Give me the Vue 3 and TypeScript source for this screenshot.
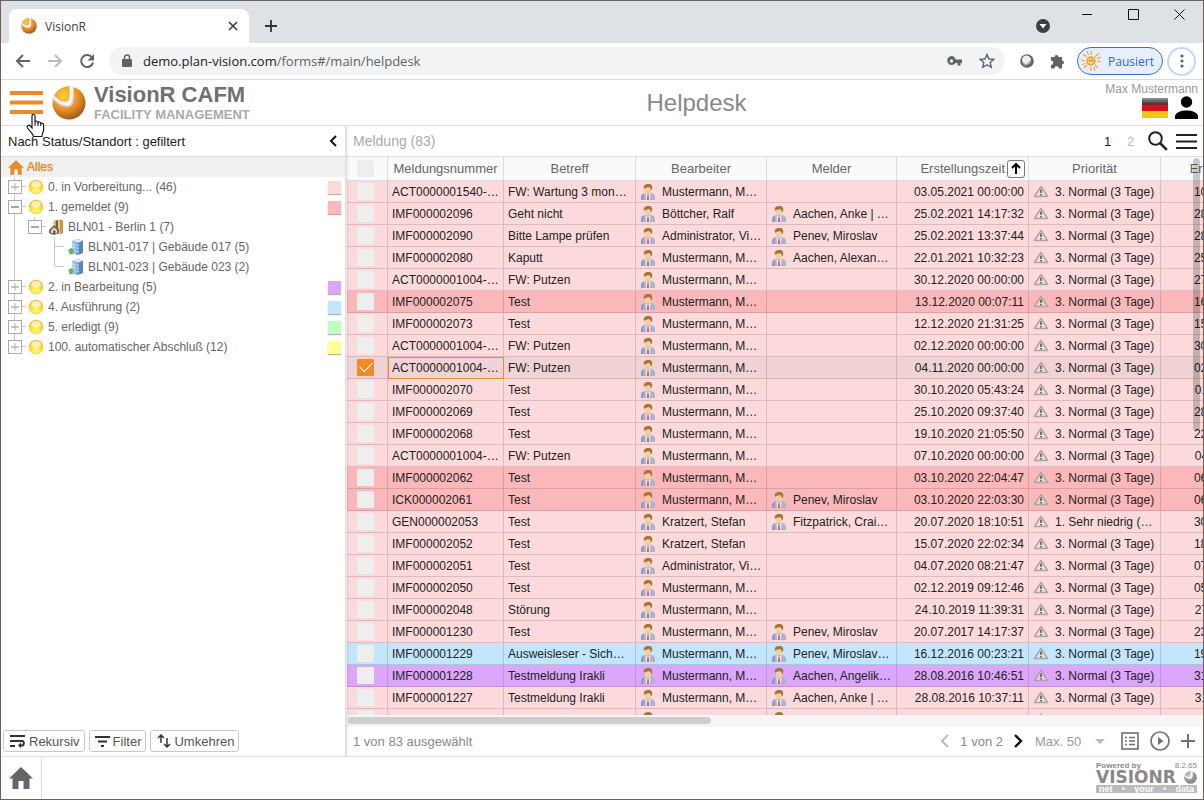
<script setup lang="ts">
import { ref } from 'vue'

type Guide = 'line' | 'blank' | 'first' | 'plus' | 'minus' | 'minusTop' | 'last' | 'tee' | 'end'

interface TreeNode {
  guides: Guide[]
  icon: string
  label: string
  swatch?: string
}

interface Ticket {
  id: string
  subject: string
  agent: string
  reporter: string
  created: string
  priority: string
  due: string
  tone: string
  selected: boolean
}

const tree: TreeNode[] = [
  { guides: ['plus'], icon: 'ball', label: '0. in Vorbereitung... (46)', swatch: 'rose' },
  { guides: ['minus'], icon: 'ball', label: '1. gemeldet (9)', swatch: 'red' },
  { guides: ['line', 'minusTop'], icon: 'site', label: 'BLN01 - Berlin 1 (7)' },
  { guides: ['line', 'blank', 'tee'], icon: 'building', label: 'BLN01-017 | Gebäude 017 (5)' },
  { guides: ['line', 'blank', 'end'], icon: 'building', label: 'BLN01-023 | Gebäude 023 (2)' },
  { guides: ['plus'], icon: 'ball', label: '2. in Bearbeitung (5)', swatch: 'purple' },
  { guides: ['plus'], icon: 'ball', label: '4. Ausführung (2)', swatch: 'blue' },
  { guides: ['plus'], icon: 'ball', label: '5. erledigt (9)', swatch: 'green' },
  { guides: ['last'], icon: 'ball', label: '100. automatischer Abschluß (12)', swatch: 'yellow' },
]

const MM = 'Mustermann, M…'
const NORMAL = '3. Normal (3 Tage)'

function t(
  id: string, subject: string, agent: string, reporter: string,
  created: string, due: string, tone = 'rose', priority = NORMAL, selected = false,
): Ticket {
  return { id, subject, agent, reporter, created, priority, due, tone, selected }
}

const tickets = ref<Ticket[]>([
  t('ACT0000001540-…', 'FW: Wartung 3 mon…', MM, '', '03.05.2021 00:00:00', '10.05.2021 00:00:00'),
  t('IMF000002096', 'Geht nicht', 'Böttcher, Ralf', 'Aachen, Anke | …', '25.02.2021 14:17:32', '28.02.2021 14:17:32'),
  t('IMF000002090', 'Bitte Lampe prüfen', 'Administrator, Vi…', 'Penev, Miroslav', '25.02.2021 13:37:44', '28.02.2021 13:37:44'),
  t('IMF000002080', 'Kaputt', MM, 'Aachen, Alexan…', '22.01.2021 10:32:23', '25.01.2021 10:32:23'),
  t('ACT0000001004-…', 'FW: Putzen', MM, '', '30.12.2020 00:00:00', '27.12.2020 00:00:00'),
  t('IMF000002075', 'Test', MM, '', '13.12.2020 00:07:11', '16.12.2020 00:07:00', 'red'),
  t('IMF000002073', 'Test', MM, '', '12.12.2020 21:31:25', '15.12.2020 21:31:25'),
  t('ACT0000001004-…', 'FW: Putzen', MM, '', '02.12.2020 00:00:00', '30.12.2020 00:00:00'),
  t('ACT0000001004-…', 'FW: Putzen', MM, '', '04.11.2020 00:00:00', '02.12.2020 00:00:00', 'rose', NORMAL, true),
  t('IMF000002070', 'Test', MM, '', '30.10.2020 05:43:24', '01.11.2020 05:43:24'),
  t('IMF000002069', 'Test', MM, '', '25.10.2020 09:37:40', '28.10.2020 09:37:40'),
  t('IMF000002068', 'Test', MM, '', '19.10.2020 21:05:50', '22.10.2020 21:05:50'),
  t('ACT0000001004-…', 'FW: Putzen', MM, '', '07.10.2020 00:00:00', '04.11.2020 00:00:00'),
  t('IMF000002062', 'Test', MM, '', '03.10.2020 22:04:47', '06.10.2020 22:04:47', 'red'),
  t('ICK000002061', 'Test', MM, 'Penev, Miroslav', '03.10.2020 22:03:30', '06.10.2020 22:03:30', 'red'),
  t('GEN000002053', 'Test', 'Kratzert, Stefan', 'Fitzpatrick, Crai…', '20.07.2020 18:10:51', '30.07.2020 18:10:51', 'rose', '1. Sehr niedrig (…'),
  t('IMF000002052', 'Test', 'Kratzert, Stefan', '', '15.07.2020 22:02:34', '18.07.2020 22:02:34'),
  t('IMF000002051', 'Test', 'Administrator, Vi…', '', '04.07.2020 08:21:47', '07.07.2020 08:21:47'),
  t('IMF000002050', 'Test', MM, '', '02.12.2019 09:12:46', '05.12.2019 09:12:46'),
  t('IMF000002048', 'Störung', MM, '', '24.10.2019 11:39:31', '27.10.2019 11:39:31'),
  t('IMF000001230', 'Test', MM, 'Penev, Miroslav', '20.07.2017 14:17:37', '23.07.2017 14:17:37'),
  t('IMF000001229', 'Ausweisleser - Sich…', MM, 'Penev, Miroslav…', '16.12.2016 00:23:21', '19.12.2016 00:23:21', 'blue'),
  t('IMF000001228', 'Testmeldung Irakli', MM, 'Aachen, Angelik…', '28.08.2016 10:46:51', '31.08.2016 10:46:51', 'purple'),
  t('IMF000001227', 'Testmeldung Irakli', MM, 'Aachen, Anke | …', '28.08.2016 10:37:11', '31.08.2016 10:37:11'),
  t('IMF000001226', 'Testmeldung Irakli', MM, 'Aachen, Anke | …', '28.08.2016 10:31:40', '31.08.2016 10:31:40'),
])

const allSelected = ref(false)
const pageSize = ref('50')
</script>

<template>
  <div class="window">
    <svg class="defs" aria-hidden="true">
      <defs>
        <radialGradient id="gOrange" cx=".38" cy=".3" r=".8">
          <stop offset="0" stop-color="#ffc35a" /><stop offset=".5" stop-color="#ea9226" /><stop offset="1" stop-color="#8a4e12" />
        </radialGradient>
        <radialGradient id="gGold" cx=".6" cy=".6" r=".7">
          <stop offset="0" stop-color="#ffd23c" /><stop offset="1" stop-color="#f09a20" />
        </radialGradient>
        <radialGradient id="gGray" cx=".4" cy=".35" r=".75">
          <stop offset="0" stop-color="#d0d0d0" /><stop offset=".5" stop-color="#9a9a9a" /><stop offset="1" stop-color="#777" />
        </radialGradient>
        <radialGradient id="gBall" cx=".5" cy=".8" r=".75">
          <stop offset="0" stop-color="#fff25a" /><stop offset=".6" stop-color="#fbdc30" /><stop offset="1" stop-color="#efb428" />
        </radialGradient>
        <linearGradient id="gFace" x1="0" y1="0" x2="1" y2="0">
          <stop offset="0" stop-color="#b4d4f2" /><stop offset="1" stop-color="#6a9dd0" />
        </linearGradient>
        <linearGradient id="gFlag" x1="0" y1="0" x2="0" y2="1">
          <stop offset="0" stop-color="#fff" stop-opacity=".5" /><stop offset=".35" stop-color="#fff" stop-opacity="0" />
        </linearGradient>
      </defs>
      <symbol id="orb" viewBox="0 0 34 34">
        <circle cx="17" cy="17" r="16.500" fill="url(#gOrange)" />
        <path d="M17.500 .5C18 5 18 9 17.500 13C16.500 17 9 17 2.500 10C5 4 10 1 17.500 .5Z" fill="url(#gGold)" />
        <path d="M.8 12.500L2.500 10C8 16.500 15 17.500 17 13.500C18 10 17.800 5 17.200 .5H21.500V11C21.500 18 19 21 14 20.500C8 19.500 4 17 .8 12.500Z" fill="#f5f4f8" />
        <path d="M.8 12.500C4 17 8 19.500 14 20.500C19 21 21.500 18 21.500 11" fill="none" stroke="#cdc6d2" stroke-width="1.400" />
      </symbol>
      <symbol id="orbGray" viewBox="0 0 34 34">
        <circle cx="17" cy="17" r="16.500" fill="url(#gGray)" />
        <path d="M.8 12.500L2.500 10C8 16.500 15 17.500 17 13.500C18 10 17.800 5 17.200 .5H22.500V11C22.500 18 19 21 14 20.500C8 19.500 4 17 .8 12.500Z" fill="#fff" />
      </symbol>
      <symbol id="ball" viewBox="0 0 16 16">
        <circle cx="8" cy="8" r="7" fill="url(#gBall)" stroke="#e3b75a" stroke-width=".5" />
        <ellipse cx="8" cy="5.300" rx="4.800" ry="3.600" fill="#fff" opacity=".65" />
        <ellipse cx="8" cy="11.500" rx="4" ry="2.500" fill="#fff36a" opacity=".7" />
      </symbol>
      <symbol id="site" viewBox="0 0 16 16">
        <path d="M5 1.500L13 .5V14L6 16Z" fill="#eccb88" />
        <path d="M12 .5L15 1.500V14L12 15.500Z" fill="#c2954c" />
        <path d="M7.500 2L10 1V12H8Z" fill="#6d5c4a" />
        <path d="M1 11L6 6L11 10V14.500L5 16L1 14Z" fill="#77685d" />
        <path d="M3 11.500L6 8.500L9 11V14L6 15L3 13.500Z" fill="#e2dfdc" />
        <path d="M5 11.500H7.500V15H5Z" fill="#8d4d44" />
      </symbol>
      <symbol id="building" viewBox="0 0 16 16">
        <path d="M4 2L9 0L15 1.500V14L10 16L4 14Z" fill="#5687b8" />
        <path d="M4 2L11 3.500V16L4 14Z" fill="url(#gFace)" />
        <path d="M4 2L9 0L15 1.500L11 3.500Z" fill="#dfe8ef" />
        <path d="M4 5L11 6.500M4 8L11 9.500M4 11L11 12.500" stroke="#d3e5f5" stroke-width=".7" />
        <path d="M3 9L6 12H4.500V15H1.500V12H0Z" fill="#5fb95c" stroke="#3f9043" stroke-width=".3" />
      </symbol>
      <symbol id="person" viewBox="0 0 16 18">
        <path d="M1 17C.5 12 2 10.500 5.500 10H10.500C14 10.500 15.500 12 15 17Z" fill="#abb3ce" />
        <path d="M1 17C.5 13 1.500 11 4 10.500L3.500 17Z" fill="#929dc0" />
        <path d="M5.500 10L8 12L10.500 10L10 17H6Z" fill="#f1ecf1" />
        <path d="M7.300 12H8.700L9.200 17H6.800Z" fill="#dd5d68" />
        <ellipse cx="8" cy="6.500" rx="3.200" ry="3.900" fill="#f5cda0" />
        <path d="M4 6C3 2.500 5 1 8.500 1C11.500 1 13 3 12 6.500L10.800 7C11 5 10 4.500 8.500 4C7 5 5 4.500 4 6Z" fill="#a27634" />
      </symbol>
      <symbol id="warn" viewBox="0 0 16 14">
        <path d="M8 1.500L14.500 11.500H1.500Z" fill="#ebe4e3" fill-opacity=".6" stroke="#aaa4a3" stroke-width="1.500" stroke-linejoin="round" />
        <path d="M8 4.500V8M8 9V10.500" stroke="#555" stroke-width="1.600" />
      </symbol>
      <symbol id="house" viewBox="0 0 24 22">
        <path d="M12 0L24 11.500H20.500V22H14.500V14H9.500V22H3.500V11.500H0Z" fill="currentColor" />
      </symbol>
    </svg>

    <header class="browser">
      <div class="tabstrip">
        <div class="tab">
          <svg width="16" height="16"><use href="#orb" /></svg>
          <span class="tab-title">VisionR</span>
          <button class="bare" aria-label="Tab schließen">
            <svg width="10" height="10" viewBox="0 0 10 10"><path d="M1 1L9 9M9 1L1 9" stroke="#3c4043" stroke-width="1.600" /></svg>
          </button>
        </div>
        <button class="bare newtab" aria-label="Neuer Tab">
          <svg width="12" height="12" viewBox="0 0 12 12"><path d="M6 0V12M0 6H12" stroke="#303336" stroke-width="1.800" /></svg>
        </button>
        <button class="bare media" aria-label="Tabs durchsuchen">
          <svg width="14" height="14" viewBox="0 0 14 14"><circle cx="7" cy="7" r="7" fill="#3c4043" /><path d="M3.500 5H10.500L7 9.500Z" fill="#fff" /></svg>
        </button>
        <div class="wincontrols">
          <button class="bare" aria-label="Minimieren"><svg width="11" height="11" viewBox="0 0 11 11"><path d="M0 5.500H10" stroke="#111" /></svg></button>
          <button class="bare" aria-label="Maximieren"><svg width="11" height="11" viewBox="0 0 11 11"><path d="M.5 .5H10.500V10.500H.5Z" fill="none" stroke="#111" /></svg></button>
          <button class="bare" aria-label="Schließen"><svg width="11" height="11" viewBox="0 0 11 11"><path d="M.5 .5L10.500 10.500M10.500 .5L.5 10.500" stroke="#111" /></svg></button>
        </div>
      </div>
      <div class="toolbar">
        <button class="bare" aria-label="Zurück"><svg width="16" height="16" viewBox="0 0 16 16"><path d="M15 8H2M8 2L2 8L8 14" fill="none" stroke="#5f6368" stroke-width="2" /></svg></button>
        <button class="bare" aria-label="Vorwärts"><svg width="16" height="16" viewBox="0 0 16 16"><path d="M1 8H14M8 2L14 8L8 14" fill="none" stroke="#bbb" stroke-width="2" /></svg></button>
        <button class="bare" aria-label="Neu laden"><svg width="16" height="16" viewBox="0 0 16 16"><path d="M13 4.500A6 6 0 1 0 14 9.500" fill="none" stroke="#5f6368" stroke-width="2" /><path d="M15 1V7.500H8.500Z" fill="#5f6368" /></svg></button>
        <div class="omnibox">
          <svg width="10" height="14" viewBox="0 0 10 14"><path d="M2.500 6V3.500A2.500 2.500 0 0 1 7.500 3.500V6" fill="none" stroke="#5f6368" stroke-width="1.500" /><rect x="0" y="5" width="10" height="8" rx="1" fill="#5f6368" /></svg>
          <span class="url">demo.plan-vision.com<span class="path">/forms#/main/helpdesk</span></span>
          <svg width="16" height="10" viewBox="0 0 16 10"><path fill-rule="evenodd" d="M4.500 0A4.500 4.500 0 1 0 8.500 7H10.500V9.500H13.500V7H15V3.500H8.500A4.500 4.500 0 0 0 4.500 0ZM4.500 3.300A1.700 1.700 0 1 1 4.500 6.700A1.700 1.700 0 0 1 4.500 3.300Z" fill="#5f6368" /></svg>
          <svg width="16" height="16" viewBox="0 0 16 16"><path d="M8 1.500L10 6L14.800 6.300L11.200 9.500L12.300 14.300L8 11.700L3.700 14.300L4.800 9.500L1.200 6.300L6 6Z" fill="none" stroke="#5f6368" stroke-width="1.400" /></svg>
        </div>
        <svg class="ext" width="14" height="14" viewBox="0 0 14 14"><circle cx="7" cy="7" r="6.800" fill="#626366" /><circle cx="6.500" cy="6" r="4.500" fill="#eee" /><path d="M3 9C5 12 9 11 11 6" fill="none" stroke="#aaa" stroke-width="1.500" /></svg>
        <svg class="puzzle" width="15" height="15" viewBox="0 0 15 15"><path d="M4.500 3A2 2 0 0 1 8.500 3H12V6.500A2 2 0 0 1 12 10.500V14.500H8.800A2 2 0 0 0 4.300 14.500H1V11A2 2 0 0 0 1 6.500V3Z" fill="#5f6368" /></svg>
        <button class="profile">
          <svg width="20" height="20" viewBox="0 0 20 20"><circle cx="10" cy="10" r="4" fill="#f9c878" stroke="#ee9d2c" stroke-width="1.400" /><path d="M10 0L10.500 4M9.500 16L10 20M0 9L4 10M16 10L20 11M2 3L6 6M14 14L17 17M18 2L14 6M3 17L6 14M6 0L7.500 4M13 16L14 20M16 7.500L20 6M1 13.500L4.500 12.500" stroke="#f0a33a" stroke-width="1.200" /><circle cx="8.800" cy="9.500" r=".8" fill="#b86f20" /><circle cx="11.500" cy="9.500" r=".8" fill="#b86f20" /></svg>
          Pausiert
        </button>
        <button class="more" aria-label="Menü"><svg width="4" height="16" viewBox="0 0 4 16"><circle cx="2" cy="3" r="1.600" fill="#5f6368" /><circle cx="2" cy="8" r="1.600" fill="#5f6368" /><circle cx="2" cy="13" r="1.600" fill="#5f6368" /></svg></button>
      </div>
    </header>

    <header class="apphead">
      <div class="brand">
        <button class="bare burger" aria-label="Hauptmenü">
          <svg width="33" height="23" viewBox="0 0 33 23"><path d="M0 2H33M0 11.500H33M0 21H33" stroke="#ea8a2a" stroke-width="4" /></svg>
          <svg class="cursor" width="19" height="25" viewBox="0 0 19 25"><path d="M6 15V3.200C6 .6 9 .6 9 3.200V9C9.500 7.500 12 7.700 12 9.500C12.700 8.500 14.800 8.800 14.800 10.500C15.800 9.700 17.600 10.300 17.600 12V17C17.600 19 16 20 16 23.500H7.500C7 20 3 18 1.300 14.500C.5 12.500 3 11.500 4.200 13Z" fill="#fff" stroke="#1a1a2a" stroke-width="1.200" /><path d="M9 9V13M12 9.500V13M14.800 10.500V13" stroke="#1a1a2a" stroke-width="1.100" /></svg>
        </button>
        <svg width="34" height="34"><use href="#orb" /></svg>
        <div class="names"><strong>VisionR CAFM</strong><span>FACILITY MANAGEMENT</span></div>
      </div>
      <h1>Helpdesk</h1>
      <div class="user">
        <span>Max Mustermann</span>
        <div class="usericons">
          <svg width="26" height="20" viewBox="0 0 26 20"><path d="M0 0H26V7H0Z" fill="#2d2d2d" /><path d="M0 6.500H26V13H0Z" fill="#d80f16" /><path d="M0 13H26V19H0Z" fill="#eec916" /><path d="M0 0H26V19H0Z" fill="url(#gFlag)" /><path d="M0 19.500H26" stroke="#bbb" /></svg>
          <svg width="23" height="23" viewBox="0 0 23 23"><circle cx="11.500" cy="6" r="5.700" /><path d="M0 23V19.500C2 15.500 7 14.500 11.500 14.500S21 15.500 23 19.500V23Z" /></svg>
        </div>
      </div>
    </header>

    <main class="panels">
      <aside class="side">
        <div class="side-title">
          <span>Nach Status/Standort : gefiltert</span>
          <button class="bare" aria-label="Einklappen"><svg width="8" height="12" viewBox="0 0 8 12"><path d="M7 1L2 6L7 11" fill="none" stroke="#111" stroke-width="2" /></svg></button>
        </div>
        <a class="all" href="#alles"><svg width="16" height="15"><use href="#house" /></svg>Alles</a>
        <ul class="tree">
          <li v-for="n in tree" :key="n.label">
            <svg v-for="(g, i) in n.guides" :key="i" class="guide" width="20" height="20" viewBox="0 0 20 20" fill="none" stroke="#c8c8c8">
              <path v-if="g === 'line'" d="M6.500 0V20" />
              <path v-if="g === 'tee'" d="M6.500 0V20M6.500 9.500H16" />
              <path v-if="g === 'end'" d="M6.500 0V9.500H16" />
              <template v-if="g === 'plus' || g === 'minus' || g === 'minusTop' || g === 'last'">
                <path d="M6.500 0V3M13 9.500H18" />
                <path v-if="g === 'plus' || g === 'minus'" d="M6.500 16V20" />
                <rect x=".5" y="3.500" width="13" height="13" stroke="#aaa" fill="#fff" />
                <path d="M3 10H11" :stroke="g === 'plus' || g === 'last' ? '#b5b5b5' : '#888'" stroke-width="1.500" />
                <path v-if="g === 'plus' || g === 'last'" d="M7 6V14" stroke="#b5b5b5" />
              </template>
            </svg>
            <svg class="nodeicon" width="16" height="16"><use :href="'#' + n.icon" /></svg>
            <span class="label">{{ n.label }}</span>
            <i v-if="n.swatch" class="swatch" :class="n.swatch"></i>
          </li>
        </ul>
        <div class="side-actions">
          <button><svg width="16" height="14" viewBox="0 0 16 14" fill="none" stroke="#333" stroke-width="2"><path d="M0 2H15M0 7H12.500A2.500 2.500 0 0 1 12.500 11.500H9M0 12H5" /><path d="M11 8.500L8 11.500L11 14Z" fill="#333" stroke="none" /></svg>Rekursiv</button>
          <button><svg width="16" height="12" viewBox="0 0 16 12" stroke="#333" stroke-width="2"><path d="M0 2H15M3 6.500H12M6 11H9" /></svg>Filter</button>
          <button><svg width="14" height="16" viewBox="0 0 14 16" fill="none" stroke="#333" stroke-width="1.500"><path d="M4 10V2M1 5L4 2L7 5M10 5V14M7 11L10 14L13 11" /></svg>Umkehren</button>
        </div>
      </aside>

      <section class="content">
        <div class="list-title">
          <h2>Meldung (83)</h2>
          <button class="bare on">1</button>
          <button class="bare off">2</button>
          <button class="bare" aria-label="Suchen"><svg width="20" height="20" viewBox="0 0 20 20"><circle cx="7.500" cy="7.500" r="6.300" fill="none" stroke="#222" stroke-width="2" /><path d="M12 12L18.800 18.800" stroke="#222" stroke-width="2.600" /></svg></button>
          <button class="bare" aria-label="Listenmenü"><svg width="21" height="15" viewBox="0 0 21 15"><path d="M0 1H21M0 7.500H21M0 14H21" stroke="#222" stroke-width="2" /></svg></button>
        </div>
        <div class="grid">
          <table>
            <colgroup><col class="c0" /><col class="c1" /><col class="c2" /><col class="c3" /><col class="c4" /><col class="c5" /><col class="c6" /><col class="c7" /></colgroup>
            <thead>
              <tr>
                <th><input v-model="allSelected" type="checkbox" aria-label="Alle auswählen" /></th>
                <th>Meldungsnummer</th>
                <th>Betreff</th>
                <th>Bearbeiter</th>
                <th>Melder</th>
                <th class="sorted"><span>Erstellungszeit<button aria-label="Aufsteigend sortiert"><svg width="12" height="13" viewBox="0 0 12 13"><path d="M6 12V2M2 6L6 2L10 6" fill="none" stroke="#000" stroke-width="2" /></svg></button></span></th>
                <th>Priorität</th>
                <th>Erledigungsfrist</th>
              </tr>
            </thead>
            <tbody>
              <tr v-for="(r, i) in tickets" :key="i" :class="[r.tone, { selected: r.selected }]">
                <td class="check"><input v-model="r.selected" type="checkbox" :aria-label="r.id" /></td>
                <td class="id">{{ r.id }}</td>
                <td>{{ r.subject }}</td>
                <td><div class="who"><svg width="16" height="18"><use href="#person" /></svg>{{ r.agent }}</div></td>
                <td><div v-if="r.reporter" class="who"><svg width="16" height="18"><use href="#person" /></svg>{{ r.reporter }}</div></td>
                <td class="num">{{ r.created }}</td>
                <td><div class="who"><svg width="16" height="14"><use href="#warn" /></svg>{{ r.priority }}</div></td>
                <td class="num">{{ r.due }}</td>
              </tr>
            </tbody>
          </table>
          <div class="vthumb"></div>
        </div>
        <div class="hscroll"><div class="hthumb"></div></div>
        <div class="status">
          <span class="count">1 von 83 ausgewählt</span>
          <button class="bare" aria-label="Vorherige Seite"><svg width="9" height="14" viewBox="0 0 9 14"><path d="M8 1L2 7L8 13" fill="none" stroke="#bbb" stroke-width="2" /></svg></button>
          <span class="pages">1 von 2</span>
          <button class="bare" aria-label="Nächste Seite"><svg width="9" height="14" viewBox="0 0 9 14"><path d="M1 1L7 7L1 13" fill="none" stroke="#111" stroke-width="2.400" /></svg></button>
          <div class="size">
            <select v-model="pageSize" aria-label="Einträge pro Seite"><option value="50">Max. 50</option></select>
            <svg width="10" height="5" viewBox="0 0 10 5"><path d="M0 0H10L5 5Z" fill="#bbb" /></svg>
          </div>
          <button class="bare" aria-label="Listenansicht"><svg width="18" height="18" viewBox="0 0 18 18"><rect x="1" y="1" width="16" height="16" fill="none" stroke="#707070" stroke-width="1.600" /><path d="M4 5.500H6M4 9H6M4 12.500H6M8 5.500H14M8 9H14M8 12.500H14" stroke="#707070" stroke-width="1.600" /></svg></button>
          <button class="bare" aria-label="Ausführen"><svg width="20" height="20" viewBox="0 0 20 20"><circle cx="10" cy="10" r="9" fill="none" stroke="#707070" stroke-width="1.700" /><path d="M8 6L13.500 10L8 14Z" fill="#707070" /></svg></button>
          <button class="bare" aria-label="Neu"><svg width="14" height="14" viewBox="0 0 14 14"><path d="M7 0V14M0 7H14" stroke="#707070" stroke-width="2" /></svg></button>
        </div>
      </section>
    </main>

    <footer class="bottom">
      <a class="home" href="#home" aria-label="Start"><svg width="24" height="22"><use href="#house" /></svg></a>
      <div class="powered">
        <div class="pw-top"><b>Powered by</b><span>8.2.65</span></div>
        <div class="pw-name"><span>VISIONR</span><svg width="13" height="13"><use href="#orbGray" /></svg></div>
        <div class="pw-bar"><span>net</span><span>•</span><span>your</span><span>•</span><span>data</span></div>
      </div>
    </footer>
  </div>
</template>

<style>
html,
body {
  margin: 0;
  overflow: hidden;
}
</style>

<style scoped>
* {
  box-sizing: border-box;
}
.window {
  height: 100vh;
  display: flex;
  flex-direction: column;
  border: 1px solid #75604f;
  border-top-color: #66676a;
  background: #fff;
  font-family: "Liberation Sans", Arial, sans-serif;
  font-size: 12px;
  color: #222;
  overflow: hidden;
}
.defs {
  position: absolute;
  width: 0;
  height: 0;
}
svg {
  display: block;
  flex: none;
}
button {
  font: inherit;
  color: inherit;
}
.bare {
  border: 0;
  padding: 0;
  background: none;
}
.browser {
  flex: none;
  font-family: "Open Sans", "Noto Sans", sans-serif;
  border-bottom: 1px solid #dadce0;
}
.tabstrip {
  display: flex;
  align-items: center;
  height: 42px;
  padding: 8px 18px 0 8px;
  background: #dee1e6;
}
.tab {
  display: flex;
  align-items: center;
  gap: 8px;
  flex: 0 1 240px;
  height: 34px;
  padding: 0 11px 0 12px;
  border-radius: 8px 8px 0 0;
  background: #fff;
}
.tab-title {
  flex: 1;
  color: #3c4043;
}
.newtab {
  margin: 0 auto 0 16px;
}
.media {
  margin-right: 32px;
}
.wincontrols {
  display: flex;
  gap: 35px;
  height: 34px;
  align-items: flex-start;
}
.toolbar {
  display: flex;
  align-items: center;
  gap: 16px;
  height: 36px;
  padding: 0 7px 0 14px;
}
.omnibox {
  flex: 1;
  display: flex;
  align-items: center;
  gap: 16px;
  height: 28px;
  margin: 0 -1px 0 -2px;
  padding: 0 10px 0 13px;
  border-radius: 14px;
  background: #f1f3f4;
}
.url {
  flex: 1;
  margin-left: -5px;
  font-size: 13px;
  color: #202124;
}
.path {
  color: #5f6368;
}
.puzzle {
  margin-right: -4px;
}
.profile {
  display: flex;
  align-items: center;
  gap: 7px;
  height: 28px;
  padding: 0 8px 0 3px;
  border: 1px solid #3a6fd0;
  border-radius: 14px;
  background: #e8effc;
  color: #2f66d0;
}
.more {
  display: grid;
  place-items: center;
  width: 29px;
  height: 29px;
  margin-left: -12px;
  padding: 0;
  border: 2px solid #c3d7fa;
  border-radius: 50%;
  background: #fff;
}
.apphead {
  flex: none;
  display: flex;
  align-items: flex-start;
  height: 46px;
  border-bottom: 1px solid #ddd;
}
.brand {
  display: flex;
  align-items: center;
  gap: 9px;
  height: 45px;
  padding-left: 9px;
}
.burger {
  position: relative;
}
.cursor {
  position: absolute;
  left: 16px;
  top: 22px;
  z-index: 2;
}
.names {
  display: flex;
  flex-direction: column;
  font-weight: bold;
  margin-left: -1px;
}
.names strong {
  font-size: 22px;
  line-height: 24px;
  color: #707070;
}
.names span {
  font-size: 13px;
  line-height: 15px;
  color: #aaa;
}
h1 {
  flex: 1;
  margin: 0;
  padding-left: 38px;
  text-align: center;
  font-size: 24px;
  font-weight: normal;
  line-height: 46px;
  color: #888;
}
.user {
  display: flex;
  flex-direction: column;
  align-items: flex-end;
  padding: 2px 5px 0 0;
  line-height: 14px;
  color: #999;
}
.usericons {
  display: flex;
  align-items: center;
  gap: 7px;
}
.panels {
  flex: 1;
  display: flex;
  min-height: 0;
}
.side {
  flex: 0 0 345px;
  display: flex;
  flex-direction: column;
  border-right: 1px solid #ddd;
  box-shadow: 1px 0 3px rgba(0, 0, 0, 0.15);
  clip-path: inset(0 -5px 0 0);
  z-index: 1;
}
.side-title {
  display: flex;
  align-items: center;
  justify-content: space-between;
  height: 31px;
  padding: 0 8px 0 7px;
  border-bottom: 1px solid #ddd;
  font-size: 13px;
}
.all {
  display: flex;
  align-items: center;
  gap: 3px;
  height: 20px;
  padding-left: 7px;
  background: #f0f0f0;
  color: #e98b2c;
  text-decoration: none;
  text-shadow: 0 0 1px #e98b2c;
}
.tree {
  flex: 1;
  margin: 0;
  padding: 0;
  list-style: none;
  color: #666;
}
.tree li {
  display: flex;
  align-items: center;
  height: 20px;
  padding: 0 4px 0 7px;
}
.nodeicon {
  margin-right: 4px;
}
.label {
  flex: 1;
  white-space: nowrap;
}
.swatch {
  width: 13px;
  height: 13px;
  box-shadow: 0 1px 1px rgba(0, 0, 0, 0.3);
}
.rose {
  background: #fcdadc;
}
.red {
  background: #fbb8ba;
}
.purple {
  background: #dba6fb;
}
.blue {
  background: #c1e6fe;
}
.green {
  background: #c0fcc0;
}
.yellow {
  background: #fefe92;
}
.side-actions {
  display: flex;
  gap: 4px;
  padding: 0 2px 4px;
}
.side-actions button {
  display: flex;
  align-items: center;
  gap: 3px;
  height: 22px;
  padding: 0 4px 0 6px;
  border: 1px solid #c8c8c8;
  border-radius: 3px;
  background: #fff;
  font-size: 13px;
  color: #555;
}
.side-actions button:nth-child(2) {
  gap: 2px;
  padding: 0 4px 0 5px;
}
.content {
  flex: 1;
  display: flex;
  flex-direction: column;
  min-width: 0;
}
.list-title {
  flex: none;
  display: flex;
  align-items: center;
  height: 31px;
  gap: 8px;
  padding: 0 6px 0 7px;
  border-bottom: 1px solid #ddd;
}
h2 {
  flex: 1;
  margin: 0;
  font-size: 14px;
  font-weight: normal;
  color: #aaa;
}
.on,
.off {
  width: 15px;
  font-size: 13px;
}
.off {
  color: #bbb;
  margin-right: 2px;
}
.grid {
  flex: 1;
  position: relative;
  min-height: 0;
  overflow: hidden;
  padding-left: 1px;
}
table {
  width: 962px;
  table-layout: fixed;
  border-collapse: separate;
  border-spacing: 0;
}
.c0 { width: 41px; }
.c1 { width: 116px; }
.c2 { width: 132px; }
.c3 { width: 131px; }
.c4 { width: 130px; }
.c5 { width: 132px; }
.c6 { width: 132px; }
.c7 { width: 148px; }
th,
td {
  padding: 0 4px;
  border-right: 1px solid rgba(80, 50, 60, 0.18);
  border-bottom: 1px solid rgba(80, 50, 60, 0.18);
  white-space: nowrap;
  overflow: hidden;
}
th {
  height: 24px;
  background: #fafafa;
  font-size: 13px;
  font-weight: normal;
  color: #666;
  border-color: #ddd;
}
td {
  height: 22px;
}
th:first-child,
td.check {
  padding: 0 0 0 10px;
}
.sorted {
  padding: 0 3px;
}
.sorted span {
  display: flex;
  align-items: center;
  justify-content: flex-end;
  gap: 2px;
}
.sorted button {
  display: grid;
  place-items: center;
  width: 18px;
  height: 18px;
  padding: 0;
  border: 1px solid #777;
  border-radius: 3px;
  background: #fff;
}
.selected {
  background: #f1d3d5;
}
.selected .id {
  outline: 1px solid #ea8c2a;
  outline-offset: -1px;
}
input[type='checkbox'] {
  appearance: none;
  display: block;
  width: 17px;
  height: 17px;
  margin: 0;
  border-radius: 1px;
  background: #eee;
}
input[type='checkbox']:checked {
  display: grid;
  place-items: center;
  background: #f08c22;
}
input[type='checkbox']:checked::after {
  content: '';
  width: 11px;
  height: 6px;
  margin-bottom: 4px;
  border: solid #fff;
  border-width: 0 0 1px 1px;
  transform: rotate(-45deg);
}
.who {
  display: flex;
  align-items: center;
  gap: 6px;
}
.num {
  text-align: right;
}
.vthumb {
  position: absolute;
  right: 3px;
  top: 1px;
  width: 7px;
  height: 49%;
  border-radius: 4px;
  background: rgba(0, 0, 0, 0.2);
}
.hscroll {
  flex: none;
  height: 10px;
  padding: 2px 2px 0;
  background: #f6f6f6;
}
.hthumb {
  width: 42.5%;
  height: 7px;
  border-radius: 4px;
  background: #cecece;
}
.status {
  flex: none;
  display: flex;
  align-items: center;
  gap: 11px;
  height: 31px;
  padding: 0 8px 0 7px;
  border-top: 1px solid #eee;
  font-size: 13px;
  color: #888;
}
.count {
  flex: 1;
}
.size {
  display: flex;
  align-items: center;
  gap: 12px;
  margin: 0 5px 0 1px;
}
select {
  appearance: none;
  width: 48px;
  padding: 0;
  border: 0;
  background: none;
  font: inherit;
  color: #999;
}
.bottom {
  flex: none;
  display: flex;
  justify-content: space-between;
  height: 43px;
  border-top: 1px solid #ddd;
}
.home {
  display: grid;
  place-items: center;
  width: 41px;
  border-right: 1px solid #ddd;
  color: #666;
}
.powered {
  width: 107px;
  padding: 4px 6px 0 0;
  color: #888;
}
.pw-top {
  display: flex;
  justify-content: space-between;
  font-size: 8px;
  line-height: 9px;
}
.pw-name {
  display: flex;
  align-items: center;
  justify-content: space-between;
  font-family: "DejaVu Sans", sans-serif;
  font-weight: bold;
  font-size: 17px;
  line-height: 15px;
}
.pw-bar {
  display: flex;
  justify-content: space-between;
  padding: 0 3px;
  background: #bbb;
  font-weight: bold;
  font-size: 9px;
  line-height: 8px;
  color: #fff;
}
</style>
